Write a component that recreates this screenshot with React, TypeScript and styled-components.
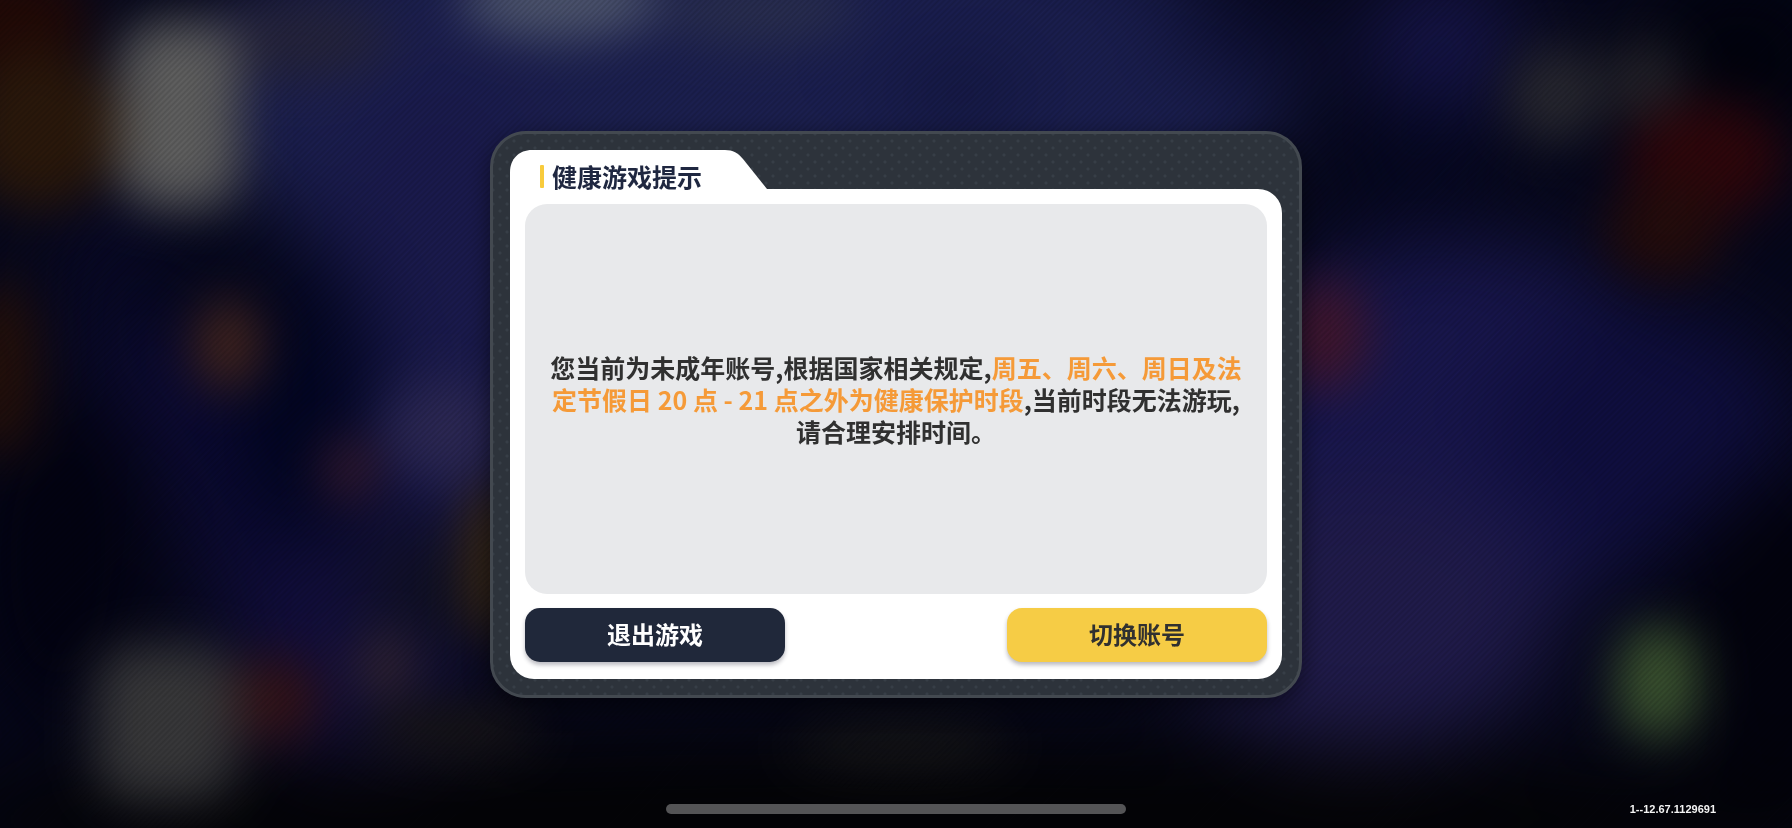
import React from 'react';
import styled, { createGlobalStyle, css } from 'styled-components';

const GlobalStyle = createGlobalStyle`
  *, *::before, *::after { box-sizing: border-box; }
  html, body { margin: 0; background: #04040c; }
  body { font-family: "Noto Sans CJK SC", sans-serif; }
`;

const Screen = styled.div`
  position: relative;
  isolation: isolate;
  display: grid;
  grid-template-rows: 1fr auto;
  min-height: 100vh;
  overflow: hidden;
  padding-top: 28px;
`;

const Scene = styled.svg`
  position: absolute;
  inset: 0;
  z-index: -2;
  width: 100%;
  height: 100%;
`;

const Stripes = styled.div`
  position: absolute;
  inset: 0;
  z-index: -1;
  background: repeating-linear-gradient(
    135deg,
    rgba(0, 0, 0, 0.14) 0,
    rgba(0, 0, 0, 0) 2px,
    rgba(0, 0, 0, 0.14) 4px
  );
`;

const Stage = styled.main`
  display: flex;
  align-items: center;
  justify-content: center;
`;

const Dialog = styled.section`
  width: min(812px, 100vw - 32px);
  padding: 16px 17px;
  border: 3px solid #434950;
  border-radius: 36px;
  background:
    radial-gradient(circle, #373e47 0 1px, transparent 2px) 0 0 / 14px 14px,
    radial-gradient(circle, #373e47 0 1px, transparent 2px) 7px 7px / 14px 14px,
    #2d333b;
  box-shadow: 0 6px 24px rgba(0, 0, 0, 0.5);
`;

const Tab = styled.header`
  position: relative;
  display: flex;
  align-items: center;
  gap: 8px;
  width: 258px;
  height: 39px;
  padding: 14px 0 0 30px;
`;

const TabShape = styled.svg`
  position: absolute;
  inset: 0;
  width: 100%;
  height: 100%;
`;

const Accent = styled.span`
  position: relative;
  width: 4px;
  height: 23px;
  border-radius: 1px;
  background: #f8cb3c;
`;

const Title = styled.h1`
  position: relative;
  margin: 0;
  color: #1f2740;
  font-size: 25px;
  font-weight: 700;
  line-height: 26px;
`;

const Panel = styled.div`
  padding: 15px 15px 17px;
  border-radius: 0 24px 24px 24px;
  background: #fff;
`;

const MessageBox = styled.div`
  display: flex;
  align-items: center;
  justify-content: center;
  min-height: 390px;
  padding: 12px 20px;
  border-radius: 22px;
  background: #e8e9eb;
`;

const Message = styled.p`
  margin: 0;
  color: #303030;
  font-size: 25px;
  font-weight: 700;
  line-height: 32px;
  text-align: center;
`;

const Highlight = styled.span`
  color: #f59a38;
`;

const Actions = styled.div`
  display: flex;
  justify-content: space-between;
  gap: 16px;
  margin-top: 14px;
`;

const ActionButton = styled.button<{ $primary?: boolean }>`
  flex: 0 1 260px;
  height: 54px;
  padding: 0 0 2px;
  border: 0;
  border-radius: 15px;
  box-shadow: 0 3px 4px rgba(30, 30, 50, 0.3);
  cursor: pointer;
  font-family: inherit;
  font-size: 24px;
  font-weight: 700;
  ${({ $primary }) =>
    $primary
      ? css`
          background: #f6cc45;
          color: #303030;
        `
      : css`
          background: #20283a;
          color: #fff;
        `}
`;

const Footer = styled.footer`
  display: grid;
  grid-template-columns: 1fr minmax(0, 460px) 1fr;
  align-items: center;
  height: 28px;
  padding-bottom: 10px;
`;

const HomeIndicator = styled.div`
  grid-column: 2;
  height: 10px;
  border-radius: 5px;
  background: #545456;
`;

const Version = styled.small`
  justify-self: end;
  margin-right: 76px;
  color: #f4f4f4;
  font-family: "Liberation Sans", sans-serif;
  font-size: 11px;
  font-weight: 700;
  line-height: 12px;
`;

type Blob = [cx: number, cy: number, rx: number, ry: number, fill: string, rotate?: number];

const washes: Blob[] = [
  [740, 100, 540, 220, '#1c2050'],
  [440, 300, 130, 240, '#1b1b4e'],
  [250, 540, 50, 330, '#100d3c', -25],
  [360, 620, 120, 150, '#130f3e'],
  [1050, 60, 260, 110, '#1b1f50'],
  [1450, 430, 240, 190, '#19174e'],
  [1360, 620, 190, 130, '#211c4c'],
  [1640, 430, 150, 120, '#100f40'],
  [1440, 50, 80, 80, '#17164a'],
  [120, 300, 50, 110, '#0c0b30'],
  [300, 400, 80, 150, '#020522'],
  [210, 285, 120, 40, '#05071c'],
  [1410, 160, 80, 60, '#050720'],
  [1250, 30, 80, 40, '#0b0c2c'],
  [960, 95, 60, 25, '#0e1138'],
  [1740, 60, 100, 90, '#02030e'],
  [60, 560, 90, 170, '#030312'],
  [1780, 640, 110, 170, '#03030e'],
  [896, 820, 1000, 80, '#040406'],
  [420, 590, 50, 60, '#10121e'],
];

const lights: Blob[] = [
  [0, 20, 90, 60, '#210906'],
  [40, 130, 80, 80, '#2a180b'],
  [0, 370, 40, 90, '#24100a'],
  [300, 40, 90, 40, '#25243c'],
  [560, 0, 100, 38, '#505870'],
  [760, 10, 100, 34, '#2a2f50'],
  [228, 345, 34, 46, '#44261e'],
  [445, 430, 60, 50, '#2c2854'],
  [350, 470, 26, 30, '#3a1c2e'],
  [490, 560, 26, 80, '#3e2c16'],
  [385, 665, 30, 30, '#34262f'],
  [275, 700, 46, 44, '#331318'],
  [1555, 95, 48, 48, '#282830'],
  [1645, 80, 38, 40, '#24232a'],
  [1705, 160, 80, 60, '#2e060b'],
  [1665, 230, 60, 50, '#240c0c'],
  [1325, 335, 44, 56, '#40162e'],
  [900, 745, 110, 22, '#171718'],
  [450, 730, 90, 28, '#171517'],
];

const Ellipses = ({ items }: { items: Blob[] }) => (
  <>
    {items.map(([cx, cy, rx, ry, fill, rotate = 0], i) => (
      <ellipse
        key={i}
        cx={cx}
        cy={cy}
        rx={rx}
        ry={ry}
        fill={fill}
        transform={`rotate(${rotate} ${cx} ${cy})`}
      />
    ))}
  </>
);

const Backdrop = () => (
  <Scene viewBox="0 0 1792 828" preserveAspectRatio="none" aria-hidden="true">
    <defs>
      <filter id="wash" x="-20%" y="-20%" width="140%" height="140%" colorInterpolationFilters="sRGB">
        <feGaussianBlur stdDeviation="42" />
      </filter>
      <filter id="glow" x="-20%" y="-20%" width="140%" height="140%" colorInterpolationFilters="sRGB">
        <feGaussianBlur stdDeviation="24" />
      </filter>
    </defs>
    <rect width="1792" height="828" fill="#07081c" />
    <g filter="url(#wash)">
      <Ellipses items={washes} />
    </g>
    <g filter="url(#glow)">
      <Ellipses items={lights} />
      <rect x="118" y="22" width="122" height="186" rx="40" fill="#606060" />
      <rect x="95" y="646" width="142" height="154" rx="40" fill="#38383a" />
      <rect x="1618" y="626" width="80" height="112" rx="36" fill="#3c5430" />
    </g>
  </Scene>
);

export default function App() {
  return (
    <>
      <GlobalStyle />
      <Screen>
        <Backdrop />
        <Stripes />
        <Stage>
          <Dialog role="dialog" aria-labelledby="dialog-title">
            <Tab>
              <TabShape viewBox="0 0 258 39" preserveAspectRatio="none" aria-hidden="true">
                <path d="M0 39V22C0 9 9 0 22 0H215C223 0 228 3 233 9L257 39Z" fill="#fff" />
              </TabShape>
              <Accent />
              <Title id="dialog-title">健康游戏提示</Title>
            </Tab>
            <Panel>
              <MessageBox>
                <Message>
                  您当前为未成年账号,根据国家相关规定,
                  <Highlight>周五、周六、周日及法定节假日 20 点 - 21 点之外为健康保护时段</Highlight>
                  ,当前时段无法游玩,请合理安排时间。
                </Message>
              </MessageBox>
              <Actions>
                <ActionButton type="button">退出游戏</ActionButton>
                <ActionButton type="button" $primary>
                  切换账号
                </ActionButton>
              </Actions>
            </Panel>
          </Dialog>
        </Stage>
        <Footer>
          <HomeIndicator />
          <Version>1--12.67.1129691</Version>
        </Footer>
      </Screen>
    </>
  );
}
